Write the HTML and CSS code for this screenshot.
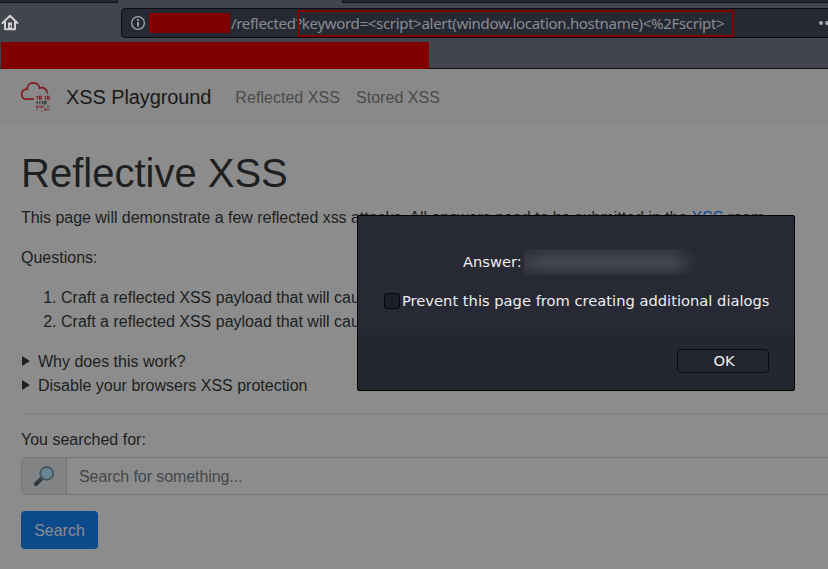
FILE: index.html
```
<!DOCTYPE html>
<html lang="en">
<head>
<meta charset="utf-8">
<title>XSS Playground</title>
<link rel="stylesheet" href="styles.css">
</head>
<body>
<header class="chrome">
  <div class="tabs"><span class="tab-rest left"></span><span class="tab-active"></span><span class="tab-rest right"></span></div>
  <div class="toolbar">
    <svg class="home" width="18" height="18" viewBox="0 0 18 18"><path d="M1.5 9 9 1.7 16.5 9M4 7.5V15.2H14V7.5" fill="none" stroke="#d0d0d0" stroke-width="2" stroke-linecap="round" stroke-linejoin="round"/><path d="M7 15.5V8.5h4v7z" fill="#d0d0d0"/><path d="M8.8 11.3h1.4v2H8.8z" fill="#42454d"/></svg>
    <div class="urlbar">
      <svg class="info" width="16" height="16" viewBox="0 0 16 16"><circle cx="8" cy="8" r="6.4" fill="none" stroke="#a6a7aa" stroke-width="1.3"/><path d="M7.1 7h1.8v4.6H7.1zM7.1 4.1h1.8v1.8H7.1z" fill="#a6a7aa"/></svg>
      <span class="host-redact"></span>
      <span class="url">/reflected?<span class="query">keyword=&lt;script&gt;alert(window.location.hostname)&lt;%2Fscript&gt;</span></span>
      <span class="marker"></span>
      <svg class="dots" width="9" height="6" viewBox="0 0 9 6"><circle cx="2" cy="3" r="2" fill="#a6a7aa"/><circle cx="8" cy="3" r="2" fill="#a6a7aa"/></svg>
    </div>
  </div>
  <div class="bookmarks"><span class="bookmark-redact"></span></div>
</header>
<nav class="navbar">
  <svg class="logo" width="30" height="30" viewBox="0 0 30 30">
    <path d="M14 17.2H5.8A5.1 5.1 0 0 1 5.8 7.2Q6.5 6.9 7.2 7.2C7 -.8 18.6-1.4 19.6 6.2C23.5 4.5 27.5 7.7 27.3 11.6" fill="none" stroke="#821b20" stroke-width="1.7"/>
    <g fill="none" stroke-width="1.1">
      <path d="M17.5 14v3.5M16.5 14.5h1M19.6 14.2h1.6v3h-1.6zM25.3 14v3.5M24.5 14.5h.8M27.4 14.2h1.6v3h-1.6z" stroke="#821b20"/>
      <path d="M17.2 19v3.2M19.8 19v3.2M22.4 19v3.2M24.4 19.2h1.6v2.8h-1.6z" stroke="#303235"/>
      <path d="M16.5 24h1v1.6h-1zM19.1 23.6v2.4M20.8 24h1v1.6h-1zM23.3 23.6v2.4M24.7 26.8h1v1.5h-1zM27.1 26.6v2M29 26.6v2M21 29.2h1.5" stroke="#821b20" stroke-width=".8"/>
      <path d="M26.7 25.8h1M29.2 23.6v2.4M16.3 27.5h1.5M27.5 23.8v1" stroke="#454749" stroke-width=".8"/>
    </g>
  </svg>
  <span class="brand">XSS Playground</span>
  <a class="nav-link">Reflected XSS</a>
  <a class="nav-link">Stored XSS</a>
</nav>
<main class="content">
  <h1>Reflective XSS</h1>
  <p class="intro">This page will demonstrate a few reflected xss attacks. All answers need to be submitted in the <a class="link">XSS</a> room.</p>
  <p>Questions:</p>
  <ol>
    <li>Craft a reflected XSS payload that will cause</li>
    <li>Craft a reflected XSS payload that will cause</li>
  </ol>
  <div class="summary"><i class="arrow"></i>Why does this work?</div>
  <div class="summary"><i class="arrow"></i>Disable your browsers XSS protection</div>
  <hr>
  <div class="searched">You searched for:</div>
  <div class="input-group">
    <span class="addon"><svg width="20" height="20" viewBox="0 0 20 20"><path d="M2 18 7.2 12.8" stroke="#30383d" stroke-width="4" stroke-linecap="round"/><path d="M7 13 9 11" stroke="#4e5a62" stroke-width="2"/><circle cx="12.7" cy="7.4" r="6.4" fill="#6a8594" stroke="#48555e" stroke-width="1.8"/></svg></span>
    <span class="field">Search for something...</span>
  </div>
  <div class="btn">Search</div>
</main>
<section class="dialog">
  <div class="dialog-body">
    <div class="answer"><span class="dtext answer-label">Answer:</span><span class="blurred"></span></div>
    <div class="prevent"><span class="check"></span><span class="dtext">Prevent this page from creating additional dialogs</span></div>
  </div>
  <div class="dialog-foot"><div class="ok">OK</div></div>
</section>
</body>
</html>
```
FILE: styles.css
```
* { box-sizing: border-box; }
body {
  margin: 0;
  width: 828px;
  height: 569px;
  overflow: hidden;
  background: #8c8c8c;
  color: #1d1f21;
  font: 16px/24px "Liberation Sans", Arial, sans-serif;
}
.chrome { height: 69px; background: #42454d; border-bottom: 1px solid #0f1116; display: flex; flex-direction: column; }
.tabs { height: 3px; flex: none; display: flex; }
.tab-rest { background: #252833; border-bottom: 1px solid #10131a; }
.tab-rest.left { width: 118px; border-right: 1px solid #10131a; }
.tab-rest.right { flex: 1; border-left: 1px solid #10131a; }
.tab-active { width: 224px; }
.toolbar { height: 39px; flex: none; display: flex; padding-top: 5px; }
.home { margin: 6px 0 0 1px; flex: none; }
.urlbar {
  position: relative;
  margin-left: 102px;
  width: 720px;
  height: 30px;
  flex: none;
  border: 1px solid #0b0d12;
  border-radius: 4px;
  background: #262934;
  display: flex;
  align-items: center;
}
.info { margin-left: 8px; flex: none; }
.host-redact { width: 81px; height: 20px; margin-left: 3px; background: #800000; border-radius: 1px; flex: none; }
.url { font: 15px/20px "Noto Sans", sans-serif; letter-spacing: -0.31px; color: #8b8c91; margin-left: 1px; white-space: pre; }
.marker { position: absolute; left: 175px; top: 1px; width: 437px; height: 27px; border: 2px solid #800000; border-radius: 1px; }
.dots { position: absolute; left: 697px; top: 11px; }
.bookmarks { height: 27px; flex: none; padding-left: 1px; }
.bookmark-redact { display: block; width: 428px; height: 27px; background: #800000; border-radius: 1px; }
.navbar { height: 56px; background: #898989; display: flex; align-items: center; padding-left: 20px; }
.logo { margin-right: 16px; }
.brand { font-size: 20px; letter-spacing: -0.1px; color: #191919; margin-right: 24px; }
.nav-link { color: #4b4b4b; margin-right: 16px; padding-top: 2px; letter-spacing: 0.04px; }
.content { padding: 24px 0 0 21px; width: 860px; }
h1 { margin: 0 0 9px; font-size: 40px; line-height: 48px; font-weight: 400; }
p { margin: 0 0 16px; }
.intro { letter-spacing: -0.037px; }
.link { color: #0d4a8c; }
ol { margin: 0 0 16px; padding-left: 40px; }
.summary { display: flex; }
.arrow { width: 0; height: 0; margin: 6px 8px 0 1px; border-left: 8px solid #1d1f21; border-top: 5px solid transparent; border-bottom: 5px solid transparent; }
hr { margin: 15px 0 14px; border: 0; height: 1px; background: #7f7f7f; }
.searched { margin-bottom: 5px; }
.input-group { height: 38px; border: 1px solid #747779; border-radius: 4px; display: flex; margin-bottom: 16px; overflow: hidden; }
.addon { width: 45px; flex: none; background: #818384; border-right: 1px solid #747779; display: flex; align-items: center; justify-content: center; }
.field { color: #43474b; padding: 7px 12px 5px; letter-spacing: -0.09px; }
.btn { width: 77px; height: 38px; line-height: 40px; text-align: center; border-radius: 4px; background: #0d4a8c; color: #8c8c8c; }
.dialog {
  position: absolute;
  left: 357px;
  top: 215px;
  width: 438px;
  height: 176px;
  border: 1px solid #000;
  border-radius: 2px;
  background: #272934;
  color: #eeeeec;
}
.dtext, .ok { font: 14.7px/20px "DejaVu Sans", sans-serif; white-space: nowrap; }
.dialog-body { height: 119px; padding-top: 33px; }
.answer { display: flex; height: 26px; align-items: center; padding-left: 105px; }
.blurred {
  width: 174px;
  height: 26px;
  margin-left: 2px;
  border-radius: 2px 10px 10px 2px;
  background: linear-gradient(#31333d, #43454e 45%, #43454e 60%, #31333d);
  mask-image: linear-gradient(90deg, rgba(0,0,0,.6), #000 12%, #000 85%, transparent);
}
.prevent { display: flex; align-items: center; margin-top: 16px; padding-left: 26px; height: 20px; }
.check { width: 16px; height: 16px; margin-right: 2px; flex: none; border: 1px solid #050608; border-radius: 3px; background: #1c1f27; }
.dialog-foot { height: 55px; background: #252730; display: flex; justify-content: flex-end; padding: 14px 25px 0 0; }
.dialog-foot .ok { width: 92px; height: 24px; line-height: 22px; padding-left: 2px; text-align: center; border: 1px solid #0a0c10; border-radius: 4px; background: #22252d; }
```
